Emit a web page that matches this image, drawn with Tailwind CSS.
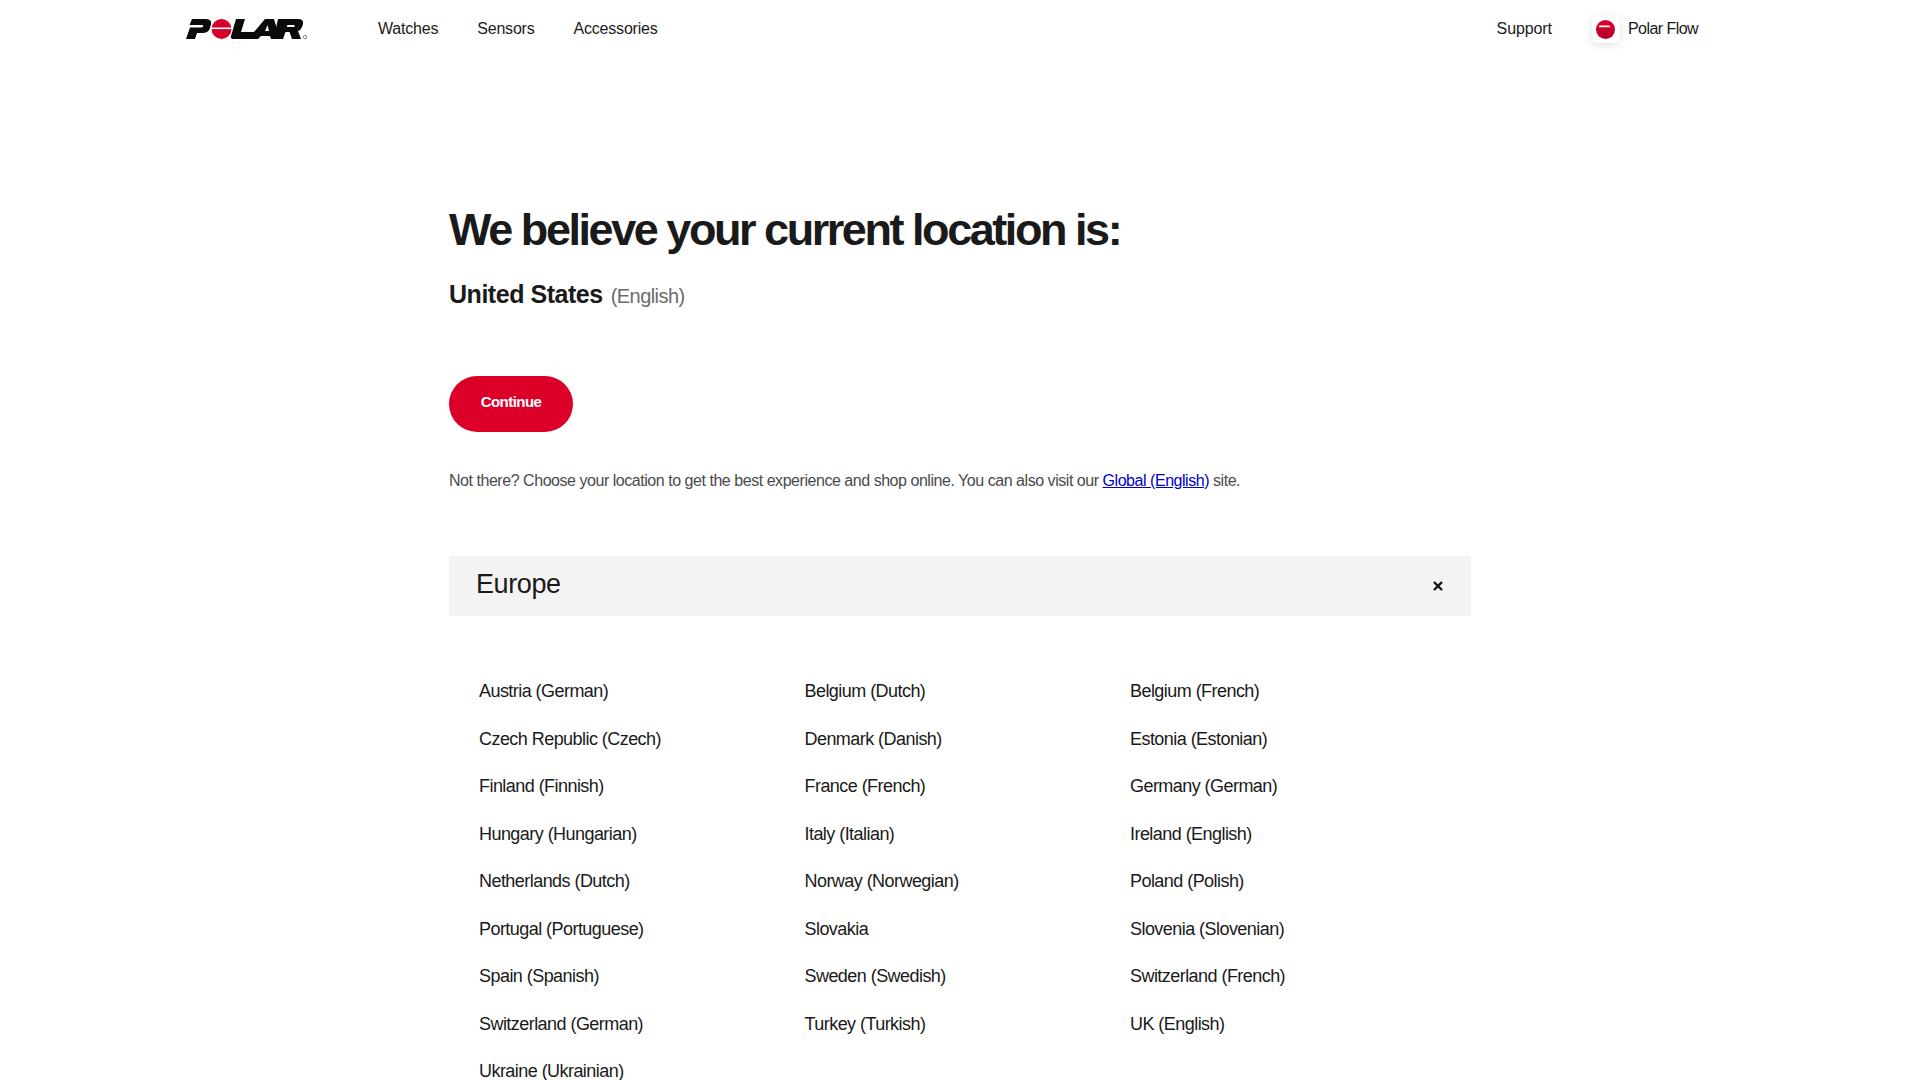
<!DOCTYPE html>
<html lang="en">
<head>
<meta charset="utf-8">
<title>Polar</title>
<script src="https://cdn.jsdelivr.net/npm/@tailwindcss/browser@4"></script>
</head>
<body class="bg-white h-[1080px] overflow-hidden font-['Liberation_Sans',sans-serif] text-[#1a1a1a]">
<header class="flex items-center h-14 pl-[186px] pr-[222px] text-[16px] tracking-[-0.2px] pt-0.5">
  <svg class="w-[122px] h-[24px] shrink-0" viewBox="0 0 122 24">
    <g fill="#0b0b0b">
      <path d="M6 2 H19 Q26 2 25 7 L24 11 Q23 16 16 16 H11 L9 22 H0 L4 10.500 H15 Q17 10.500 17.300 9 Q17.500 8 16 8 H3.500 Z"/>
      <path d="M50 2 H59 L55 15 H71 L68.500 22 H47 Q44 22 45 19 Z"/>
      <path d="M79 2 H88 L94 22 H85 L84 19 H75 L72 22 H62 Z M79 14 H83 L81.500 8 Z"/>
      <path d="M92 2 H112 Q118 2 117 7 L116 10 Q115 13 112 14 L115 22 H106 L103.500 15 H99.500 L97 22 H87.500 Z M101.500 8 L100.800 10 H107.500 Q108.500 10 108.700 9 Q109 8 108 8 Z"/>
    </g>
    <circle cx="35.500" cy="12" r="10" fill="#d7002a"/>
    <rect x="25" y="10.500" width="21" height="1.600" fill="#fff"/>
    <circle cx="119" cy="20" r="1.700" fill="none" stroke="#555" stroke-width="0.700"/>
  </svg>
  <nav class="flex gap-[39px] ml-[70px]"><a>Watches</a><a>Sensors</a><a>Accessories</a></nav>
  <div class="ml-auto flex items-center"><a class="tracking-[-0.1px]">Support</a>
    <span class="ml-10 w-7 h-7 rounded-md bg-white shadow-[0_2px_10px_rgba(0,0,0,0.12)] flex items-center justify-center">
      <svg class="w-[19px] h-[19px]" viewBox="0 0 19 19"><defs><linearGradient id="flow" x1="0" y1="0" x2="0" y2="1"><stop offset="0" stop-color="#e0002c"/><stop offset="1" stop-color="#b00028"/></linearGradient></defs><circle cx="9.500" cy="9.500" r="9.500" fill="url(#flow)"/><rect x="3" y="5.500" width="11" height="1.800" rx="0.900" fill="#fff"/></svg>
    </span>
    <a class="ml-2 tracking-[-0.55px]">Polar Flow</a>
  </div>
</header>
<main class="w-[1022px] ml-[449px]">
  <h1 class="mt-[146px] text-[45px] leading-[56px] font-bold tracking-[-2.45px]">We believe your current location is:</h1>
  <p class="mt-[20px] flex items-baseline gap-2 leading-8"><span class="text-[25px] font-semibold tracking-[-0.47px]">United States</span><span class="text-xl text-[#6b6b6b] tracking-[-0.55px]">(English)</span></p>
  <a class="mt-[66px] flex w-[124px] h-14 rounded-full bg-[#dc0029] text-white text-[15px] font-bold tracking-[-0.55px] items-center justify-center pb-1">Continue</a>
  <p class="mt-[37px] text-[16px] leading-6 text-[#4a4a4a] tracking-[-0.46px]">Not there? Choose your location to get the best experience and shop online. You can also visit our <a class="text-[#0000c8] underline">Global (English)</a> site.</p>
  <div class="mt-[63px] h-[60px] bg-[#f3f3f3] flex items-center justify-between pl-[27px] pr-[28px]">
    <h2 class="text-[27px] font-medium tracking-[-0.4px] pb-1">Europe</h2>
    <svg class="w-[10px] h-[10px]" viewBox="0 0 10 10"><path d="M1 1 L9 9 M9 1 L1 9" stroke="#111" stroke-width="2.400"/></svg>
  </div>
  <ul class="mt-[52px] pl-[30px] grid grid-cols-[325.500px_325.500px_1fr] auto-rows-[47.500px] items-center text-[18px] tracking-[-0.55px]">
    <li>Austria (German)</li><li>Belgium (Dutch)</li><li>Belgium (French)</li>
    <li>Czech Republic (Czech)</li><li>Denmark (Danish)</li><li>Estonia (Estonian)</li>
    <li>Finland (Finnish)</li><li>France (French)</li><li>Germany (German)</li>
    <li>Hungary (Hungarian)</li><li>Italy (Italian)</li><li>Ireland (English)</li>
    <li>Netherlands (Dutch)</li><li>Norway (Norwegian)</li><li>Poland (Polish)</li>
    <li>Portugal (Portuguese)</li><li>Slovakia</li><li>Slovenia (Slovenian)</li>
    <li>Spain (Spanish)</li><li>Sweden (Swedish)</li><li>Switzerland (French)</li>
    <li>Switzerland (German)</li><li>Turkey (Turkish)</li><li>UK (English)</li>
    <li>Ukraine (Ukrainian)</li>
  </ul>
</main>
</body>
</html>
